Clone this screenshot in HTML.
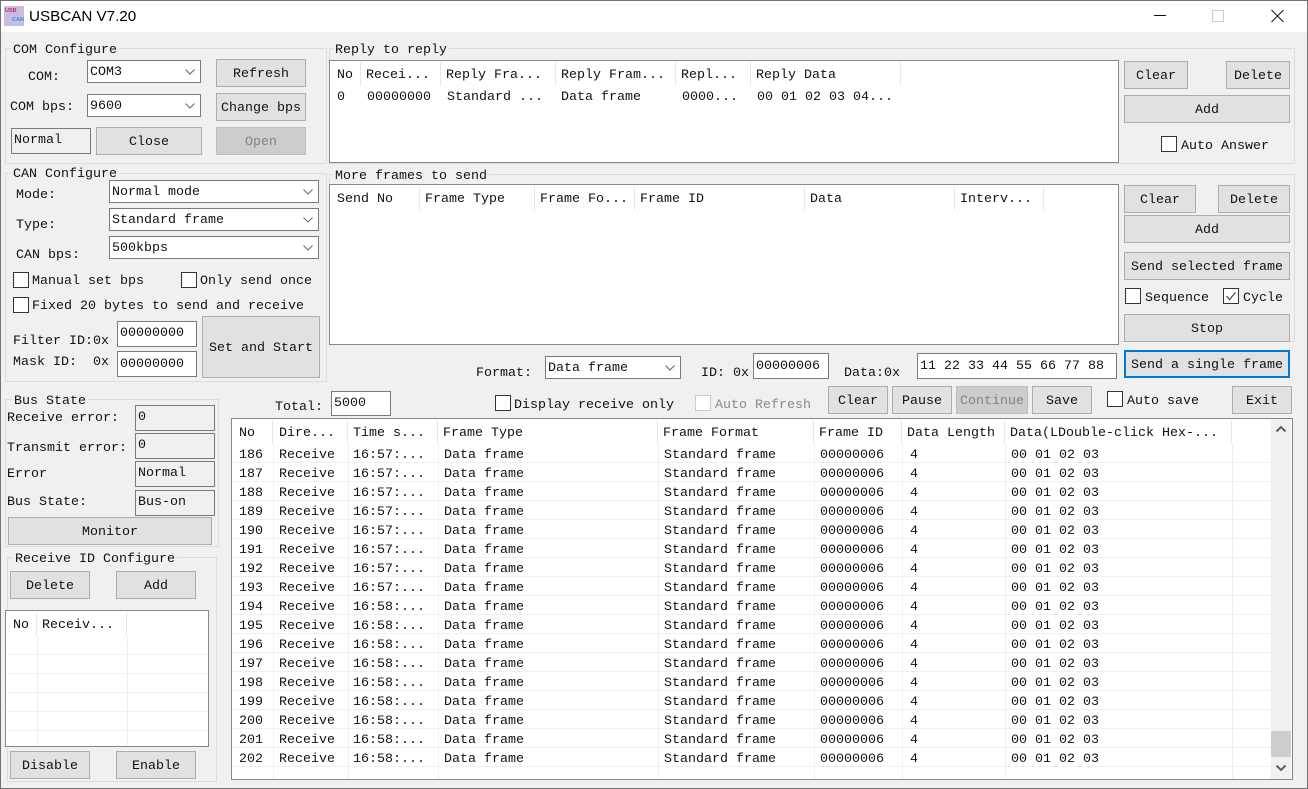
<!DOCTYPE html>
<html><head><meta charset="utf-8"><style>
*{box-sizing:border-box}
html,body{margin:0;padding:0}
body{width:1308px;height:789px;position:relative;overflow:hidden;background:#f0f0f0;font:13.33px/20px "Liberation Mono",monospace;color:#111}
div,span{position:absolute;white-space:pre}
.tb{left:0;top:0;width:1308px;height:32px;background:#fff}
.w{left:0;top:0;width:1308px;height:789px;border:1px solid #707070;z-index:9;pointer-events:none}
.g{border:1px solid #dcdcdc}
.gt{background:#f0f0f0;padding:0 2px;height:16px;line-height:20px}
.b{background:#e1e1e1;border:1px solid #adadad;text-align:center;line-height:29px}
.d{background:#ccc;border-color:#bfbfbf;color:#838383}
.i{background:#fff;border:1px solid #7a7a7a;padding:0 0 0 2px;line-height:24px}
.r{background:#f0f0f0;border:1px solid #7a7a7a;padding:0 0 0 2px;line-height:24px}
.c{background:#fff;border:1px solid #7a7a7a;padding:0 0 0 2px;line-height:23px}
.c svg{position:absolute;right:5px;top:8px}
.k{width:16px;height:16px;background:#fff;border:1px solid #333}
.l{background:#fff;border:1px solid #828790}
.sh{width:1px;background:#e8e8e8}
.sv{width:1px;background:#f0f0f0}
.sl{height:1px;background:#f0f0f0}
.row{left:0;width:1039px;height:19px;line-height:21px}
.row span{top:0}
.a1{left:7px}.a2{left:47px}.a3{left:121px}.a4{left:212px}.a5{left:432px}.a6{left:588px}.a7{left:678px}.a8{left:779px}
</style></head><body>
<div class="tb"></div>
<div style="left:4px;top:6px;width:20px;height:20px;background:#c9bce3"></div>
<div style="left:5px;top:7px;font:bold 5.5px/9px 'Liberation Sans',sans-serif;color:#e8213f">USB</div>
<div style="left:12px;top:16px;font:bold 5.5px/9px 'Liberation Sans',sans-serif;color:#2f8fe0">CAN</div>
<div style="left:29px;top:8px;font:15.2px/18px 'Liberation Sans',sans-serif;color:#000">USBCAN V7.20</div>
<svg style="position:absolute;left:1150px;top:6px" width="140" height="20" fill="none"><path d="M4 9.5H16" stroke="#111"/><rect x="62.5" y="4.5" width="11" height="11" stroke="#ccc"/><path d="M121.5 4L133.5 16M133.5 4L121.5 16" stroke="#111"/></svg>

<!-- COM group -->
<div class="g" style="left:5px;top:48px;width:322px;height:116px"></div>
<div class="gt" style="left:11px;top:41px">COM Configure</div>
<div style="left:28px;top:68px">COM:</div>
<div style="left:10px;top:98px">COM bps:</div>
<div class="c" style="left:87px;top:60px;width:114px;height:23px">COM3<svg width="10" height="6" fill="none"><path d="M.5 .5L5 5L9.5 .5" stroke="#666"/></svg></div>
<div class="c" style="left:87px;top:94px;width:114px;height:23px">9600<svg width="10" height="6" fill="none"><path d="M.5 .5L5 5L9.5 .5" stroke="#666"/></svg></div>
<div class="b" style="left:216px;top:59px;width:90px;height:28px">Refresh</div>
<div class="b" style="left:216px;top:93px;width:90px;height:28px">Change bps</div>
<div class="r" style="left:11px;top:128px;width:80px;height:26px">Normal</div>
<div class="b" style="left:96px;top:127px;width:106px;height:28px">Close</div>
<div class="b d" style="left:216px;top:127px;width:90px;height:28px">Open</div>

<!-- CAN group -->
<div class="g" style="left:5px;top:173px;width:322px;height:209px"></div>
<div class="gt" style="left:11px;top:165px">CAN Configure</div>
<div style="left:16px;top:186px">Mode:</div>
<div style="left:16px;top:216px">Type:</div>
<div style="left:16px;top:246px">CAN bps:</div>
<div class="c" style="left:109px;top:180px;width:210px;height:23px">Normal mode<svg width="10" height="6" fill="none"><path d="M.5 .5L5 5L9.5 .5" stroke="#666"/></svg></div>
<div class="c" style="left:109px;top:208px;width:210px;height:23px">Standard frame<svg width="10" height="6" fill="none"><path d="M.5 .5L5 5L9.5 .5" stroke="#666"/></svg></div>
<div class="c" style="left:109px;top:236px;width:210px;height:23px">500kbps<svg width="10" height="6" fill="none"><path d="M.5 .5L5 5L9.5 .5" stroke="#666"/></svg></div>
<div class="k" style="left:13px;top:272px"></div><div style="left:32px;top:272px">Manual set bps</div>
<div class="k" style="left:181px;top:272px"></div><div style="left:200px;top:272px">Only send once</div>
<div class="k" style="left:13px;top:297px"></div><div style="left:32px;top:297px">Fixed 20 bytes to send and receive</div>
<div style="left:13px;top:332px">Filter ID:0x</div>
<div style="left:13px;top:353px">Mask ID:  0x</div>
<div class="i" style="left:117px;top:321px;width:80px;height:26px">00000000</div>
<div class="i" style="left:117px;top:351px;width:80px;height:26px;line-height:25px">00000000</div>
<div class="b" style="left:202px;top:316px;width:118px;height:62px;line-height:64px">Set and Start</div>

<!-- Reply -->
<div class="g" style="left:329px;top:48px;width:966px;height:116px"></div>
<div class="gt" style="left:333px;top:41px">Reply to reply</div>
<div class="l" style="left:329px;top:60px;width:790px;height:103px"></div>
<div class="sh" style="left:360px;top:62px;height:24px"></div>
<div class="sh" style="left:440px;top:62px;height:24px"></div>
<div class="sh" style="left:555px;top:62px;height:24px"></div>
<div class="sh" style="left:675px;top:62px;height:24px"></div>
<div class="sh" style="left:750px;top:62px;height:24px"></div>
<div class="sh" style="left:900px;top:62px;height:24px"></div>
<div style="left:337px;top:66px">No</div><div style="left:366px;top:66px">Recei...</div><div style="left:446px;top:66px">Reply Fra...</div><div style="left:561px;top:66px">Reply Fram...</div><div style="left:681px;top:66px">Repl...</div><div style="left:756px;top:66px">Reply Data</div>
<div style="left:337px;top:88px">0</div><div style="left:367px;top:88px">00000000</div><div style="left:447px;top:88px">Standard ...</div><div style="left:561px;top:88px">Data frame</div><div style="left:682px;top:88px">0000...</div><div style="left:757px;top:88px">00 01 02 03 04...</div>
<div class="b" style="left:1124px;top:61px;width:64px;height:28px">Clear</div>
<div class="b" style="left:1226px;top:61px;width:64px;height:28px">Delete</div>
<div class="b" style="left:1124px;top:95px;width:166px;height:28px">Add</div>
<div class="k" style="left:1161px;top:136px"></div><div style="left:1181px;top:137px">Auto Answer</div>

<!-- More frames -->
<div class="g" style="left:329px;top:174px;width:966px;height:168px"></div>
<div class="gt" style="left:333px;top:167px">More frames to send</div>
<div class="l" style="left:329px;top:184px;width:790px;height:161px"></div>
<div class="sh" style="left:419px;top:186px;height:24px"></div>
<div class="sh" style="left:534px;top:186px;height:24px"></div>
<div class="sh" style="left:634px;top:186px;height:24px"></div>
<div class="sh" style="left:804px;top:186px;height:24px"></div>
<div class="sh" style="left:954px;top:186px;height:24px"></div>
<div class="sh" style="left:1043px;top:186px;height:24px"></div>
<div style="left:337px;top:190px">Send No</div><div style="left:425px;top:190px">Frame Type</div><div style="left:540px;top:190px">Frame Fo...</div><div style="left:640px;top:190px">Frame ID</div><div style="left:810px;top:190px">Data</div><div style="left:960px;top:190px">Interv...</div>
<div class="b" style="left:1124px;top:185px;width:72px;height:28px">Clear</div>
<div class="b" style="left:1218px;top:185px;width:72px;height:28px">Delete</div>
<div class="b" style="left:1124px;top:215px;width:166px;height:28px">Add</div>
<div class="b" style="left:1124px;top:252px;width:166px;height:28px">Send selected frame</div>
<div class="k" style="left:1125px;top:288px"></div><div style="left:1145px;top:289px">Sequence</div>
<div class="k" style="left:1223px;top:288px"><svg style="position:absolute;left:1px;top:2px" width="12" height="10" fill="none"><path d="M1.5 5L4.5 8.5L10.5 1.5" stroke="#444" stroke-width="1.2"/></svg></div><div style="left:1243px;top:289px">Cycle</div>
<div class="b" style="left:1124px;top:314px;width:166px;height:28px">Stop</div>
<div class="b" style="left:1124px;top:350px;width:166px;height:28px;border:2px solid #0078d7;line-height:28px">Send a single frame</div>

<div style="left:476px;top:364px">Format:</div>
<div class="c" style="left:545px;top:356px;width:136px;height:23px">Data frame<svg width="10" height="6" fill="none"><path d="M.5 .5L5 5L9.5 .5" stroke="#666"/></svg></div>
<div style="left:701px;top:364px">ID: 0x</div>
<div class="i" style="left:753px;top:353px;width:76px;height:26px;line-height:25px">00000006</div>
<div style="left:844px;top:364px">Data:0x</div>
<div class="i" style="left:917px;top:353px;width:200px;height:26px;line-height:25px">11 22 33 44 55 66 77 88</div>

<div style="left:275px;top:398px">Total:</div>
<div class="i" style="left:331px;top:391px;width:60px;height:25px">5000</div>
<div class="k" style="left:495px;top:395px"></div><div style="left:514px;top:396px">Display receive only</div>
<div class="k" style="left:695px;top:395px;border-color:#ccc"></div><div style="left:715px;top:396px;color:#8a8a8a">Auto Refresh</div>
<div class="b" style="left:828px;top:386px;width:60px;height:28px">Clear</div>
<div class="b" style="left:892px;top:386px;width:60px;height:28px">Pause</div>
<div class="b d" style="left:956px;top:386px;width:72px;height:28px">Continue</div>
<div class="b" style="left:1032px;top:386px;width:60px;height:28px">Save</div>
<div class="k" style="left:1107px;top:391px"></div><div style="left:1127px;top:392px">Auto save</div>
<div class="b" style="left:1232px;top:386px;width:60px;height:28px">Exit</div>

<!-- Bus state -->
<div class="g" style="left:5px;top:399px;width:214px;height:148px"></div>
<div class="gt" style="left:12px;top:392px">Bus State</div>
<div style="left:7px;top:409px">Receive error:</div>
<div style="left:7px;top:439px">Transmit error:</div>
<div style="left:7px;top:465px">Error</div>
<div style="left:7px;top:493px">Bus State:</div>
<div class="r" style="left:135px;top:405px;width:80px;height:26px">0</div>
<div class="r" style="left:135px;top:433px;width:80px;height:26px">0</div>
<div class="r" style="left:135px;top:461px;width:80px;height:26px">Normal</div>
<div class="r" style="left:135px;top:490px;width:80px;height:26px">Bus-on</div>
<div class="b" style="left:8px;top:517px;width:204px;height:28px">Monitor</div>

<!-- Receive ID -->
<div class="g" style="left:7px;top:557px;width:210px;height:225px"></div>
<div class="gt" style="left:13px;top:550px">Receive ID Configure</div>
<div class="b" style="left:10px;top:571px;width:80px;height:28px">Delete</div>
<div class="b" style="left:116px;top:571px;width:80px;height:28px">Add</div>
<div class="l" style="left:5px;top:610px;width:204px;height:137px"></div>
<div class="sh" style="left:36px;top:612px;height:24px"></div>
<div class="sh" style="left:126px;top:612px;height:24px"></div>
<div class="sv" style="left:37px;top:636px;height:110px"></div>
<div class="sv" style="left:127px;top:636px;height:110px"></div>
<div class="sl" style="left:6px;top:654px;width:202px"></div>
<div class="sl" style="left:6px;top:673px;width:202px"></div>
<div class="sl" style="left:6px;top:692px;width:202px"></div>
<div class="sl" style="left:6px;top:711px;width:202px"></div>
<div class="sl" style="left:6px;top:730px;width:202px"></div>
<div style="left:13px;top:616px">No</div><div style="left:42px;top:616px">Receiv...</div>
<div class="b" style="left:10px;top:751px;width:80px;height:28px">Disable</div>
<div class="b" style="left:116px;top:751px;width:80px;height:28px">Enable</div>

<!-- Main table -->
<div class="l" style="left:231px;top:418px;width:1062px;height:362px"></div>
<div class="sh" style="left:272px;top:420px;height:24px"></div>
<div class="sh" style="left:347px;top:420px;height:24px"></div>
<div class="sh" style="left:437px;top:420px;height:24px"></div>
<div class="sh" style="left:657px;top:420px;height:24px"></div>
<div class="sh" style="left:813px;top:420px;height:24px"></div>
<div class="sh" style="left:901px;top:420px;height:24px"></div>
<div class="sh" style="left:1004px;top:420px;height:24px"></div>
<div class="sh" style="left:1231px;top:420px;height:24px"></div>
<div style="left:239px;top:424px">No</div><div style="left:279px;top:424px">Dire...</div><div style="left:353px;top:424px">Time s...</div><div style="left:443px;top:424px">Frame Type</div><div style="left:663px;top:424px">Frame Format</div><div style="left:819px;top:424px">Frame ID</div><div style="left:907px;top:424px">Data Length</div><div style="left:1010px;top:424px">Data(LDouble-click Hex-...</div>
<div class="sv" style="left:273px;top:444px;height:335px"></div>
<div class="sv" style="left:348px;top:444px;height:335px"></div>
<div class="sv" style="left:438px;top:444px;height:335px"></div>
<div class="sv" style="left:658px;top:444px;height:335px"></div>
<div class="sv" style="left:814px;top:444px;height:335px"></div>
<div class="sv" style="left:902px;top:444px;height:335px"></div>
<div class="sv" style="left:1005px;top:444px;height:335px"></div>
<div class="sv" style="left:1232px;top:444px;height:335px"></div>
<div style="left:232px;top:445px;width:1039px;height:323px">
<div class="sl" style="left:0;top:17px;width:1039px"></div><div class="sl" style="left:0;top:36px;width:1039px"></div><div class="sl" style="left:0;top:55px;width:1039px"></div><div class="sl" style="left:0;top:74px;width:1039px"></div><div class="sl" style="left:0;top:93px;width:1039px"></div><div class="sl" style="left:0;top:112px;width:1039px"></div><div class="sl" style="left:0;top:131px;width:1039px"></div><div class="sl" style="left:0;top:150px;width:1039px"></div><div class="sl" style="left:0;top:169px;width:1039px"></div><div class="sl" style="left:0;top:188px;width:1039px"></div><div class="sl" style="left:0;top:207px;width:1039px"></div><div class="sl" style="left:0;top:226px;width:1039px"></div><div class="sl" style="left:0;top:245px;width:1039px"></div><div class="sl" style="left:0;top:264px;width:1039px"></div><div class="sl" style="left:0;top:283px;width:1039px"></div><div class="sl" style="left:0;top:302px;width:1039px"></div><div class="sl" style="left:0;top:321px;width:1039px"></div>
<div class="row" style="top:0"><span class="a1">186</span><span class="a2">Receive</span><span class="a3">16:57:...</span><span class="a4">Data frame</span><span class="a5">Standard frame</span><span class="a6">00000006</span><span class="a7">4</span><span class="a8">00 01 02 03</span></div>
<div class="row" style="top:19px"><span class="a1">187</span><span class="a2">Receive</span><span class="a3">16:57:...</span><span class="a4">Data frame</span><span class="a5">Standard frame</span><span class="a6">00000006</span><span class="a7">4</span><span class="a8">00 01 02 03</span></div>
<div class="row" style="top:38px"><span class="a1">188</span><span class="a2">Receive</span><span class="a3">16:57:...</span><span class="a4">Data frame</span><span class="a5">Standard frame</span><span class="a6">00000006</span><span class="a7">4</span><span class="a8">00 01 02 03</span></div>
<div class="row" style="top:57px"><span class="a1">189</span><span class="a2">Receive</span><span class="a3">16:57:...</span><span class="a4">Data frame</span><span class="a5">Standard frame</span><span class="a6">00000006</span><span class="a7">4</span><span class="a8">00 01 02 03</span></div>
<div class="row" style="top:76px"><span class="a1">190</span><span class="a2">Receive</span><span class="a3">16:57:...</span><span class="a4">Data frame</span><span class="a5">Standard frame</span><span class="a6">00000006</span><span class="a7">4</span><span class="a8">00 01 02 03</span></div>
<div class="row" style="top:95px"><span class="a1">191</span><span class="a2">Receive</span><span class="a3">16:57:...</span><span class="a4">Data frame</span><span class="a5">Standard frame</span><span class="a6">00000006</span><span class="a7">4</span><span class="a8">00 01 02 03</span></div>
<div class="row" style="top:114px"><span class="a1">192</span><span class="a2">Receive</span><span class="a3">16:57:...</span><span class="a4">Data frame</span><span class="a5">Standard frame</span><span class="a6">00000006</span><span class="a7">4</span><span class="a8">00 01 02 03</span></div>
<div class="row" style="top:133px"><span class="a1">193</span><span class="a2">Receive</span><span class="a3">16:57:...</span><span class="a4">Data frame</span><span class="a5">Standard frame</span><span class="a6">00000006</span><span class="a7">4</span><span class="a8">00 01 02 03</span></div>
<div class="row" style="top:152px"><span class="a1">194</span><span class="a2">Receive</span><span class="a3">16:58:...</span><span class="a4">Data frame</span><span class="a5">Standard frame</span><span class="a6">00000006</span><span class="a7">4</span><span class="a8">00 01 02 03</span></div>
<div class="row" style="top:171px"><span class="a1">195</span><span class="a2">Receive</span><span class="a3">16:58:...</span><span class="a4">Data frame</span><span class="a5">Standard frame</span><span class="a6">00000006</span><span class="a7">4</span><span class="a8">00 01 02 03</span></div>
<div class="row" style="top:190px"><span class="a1">196</span><span class="a2">Receive</span><span class="a3">16:58:...</span><span class="a4">Data frame</span><span class="a5">Standard frame</span><span class="a6">00000006</span><span class="a7">4</span><span class="a8">00 01 02 03</span></div>
<div class="row" style="top:209px"><span class="a1">197</span><span class="a2">Receive</span><span class="a3">16:58:...</span><span class="a4">Data frame</span><span class="a5">Standard frame</span><span class="a6">00000006</span><span class="a7">4</span><span class="a8">00 01 02 03</span></div>
<div class="row" style="top:228px"><span class="a1">198</span><span class="a2">Receive</span><span class="a3">16:58:...</span><span class="a4">Data frame</span><span class="a5">Standard frame</span><span class="a6">00000006</span><span class="a7">4</span><span class="a8">00 01 02 03</span></div>
<div class="row" style="top:247px"><span class="a1">199</span><span class="a2">Receive</span><span class="a3">16:58:...</span><span class="a4">Data frame</span><span class="a5">Standard frame</span><span class="a6">00000006</span><span class="a7">4</span><span class="a8">00 01 02 03</span></div>
<div class="row" style="top:266px"><span class="a1">200</span><span class="a2">Receive</span><span class="a3">16:58:...</span><span class="a4">Data frame</span><span class="a5">Standard frame</span><span class="a6">00000006</span><span class="a7">4</span><span class="a8">00 01 02 03</span></div>
<div class="row" style="top:285px"><span class="a1">201</span><span class="a2">Receive</span><span class="a3">16:58:...</span><span class="a4">Data frame</span><span class="a5">Standard frame</span><span class="a6">00000006</span><span class="a7">4</span><span class="a8">00 01 02 03</span></div>
<div class="row" style="top:304px"><span class="a1">202</span><span class="a2">Receive</span><span class="a3">16:58:...</span><span class="a4">Data frame</span><span class="a5">Standard frame</span><span class="a6">00000006</span><span class="a7">4</span><span class="a8">00 01 02 03</span></div>
</div>
<div style="left:1271px;top:419px;width:20px;height:360px;background:#f0f0f0"></div>
<div style="left:1271px;top:731px;width:20px;height:26px;background:#cdcdcd"></div>
<svg style="position:absolute;left:1275px;top:425px" width="12" height="8" fill="none"><path d="M1.5 6.5L6 2L10.5 6.5" stroke="#606060" stroke-width="2"/></svg>
<svg style="position:absolute;left:1275px;top:764px" width="12" height="8" fill="none"><path d="M1.5 1.5L6 6L10.5 1.5" stroke="#606060" stroke-width="2"/></svg>
<div class="w"></div>
</body></html>
